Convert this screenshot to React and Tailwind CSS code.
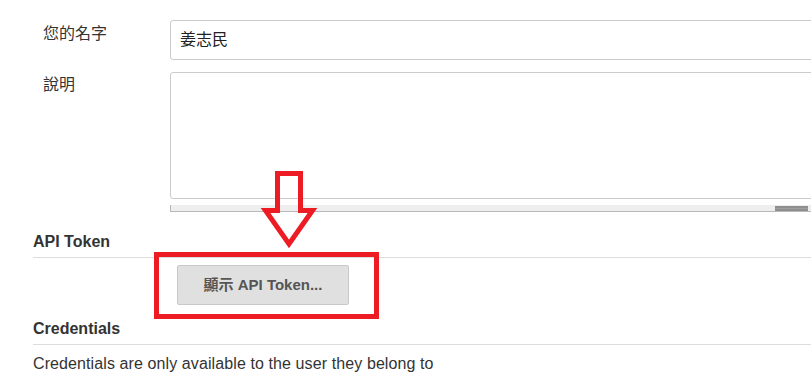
export default function App() {
  return (
    <div className="relative w-[811px] h-[380px] overflow-hidden bg-white text-[#333] font-['Liberation_Sans','Noto_Sans_CJK_TC',sans-serif]">
      <div className="pt-[20px]">
        {/* Row: name */}
        <div className="flex pl-[43px]">
          <div className="w-[127px] shrink-0 pt-[4px] text-[16px] leading-[20px]">您的名字</div>
          <div className="w-[660px] h-[40px] shrink-0 border border-[#cccccc] rounded-[3px] flex items-center pl-[9px] text-[16px] leading-[20px] text-[#222]">
            姜志民
          </div>
        </div>
        {/* Row: description */}
        <div className="flex pl-[43px] mt-[12px]">
          <div className="w-[127px] shrink-0 pt-[3px] text-[16px] leading-[20px]">說明</div>
          <div className="w-[660px] h-[127px] shrink-0 border border-[#cccccc] rounded-[3px]"></div>
        </div>
        {/* scroll strip */}
        <div className="ml-[170px] mt-[6px] w-[641px] h-[7px] bg-[#eeeeee] border-l border-b border-[#b8b8b8] flex justify-end items-center pr-[3px]">
          <div className="w-[33px] h-[5px] bg-[#a0a0a0] border-y-2 border-[#8f8f8f]"></div>
        </div>

        <div className="pl-[33px]">
          {/* API Token */}
          <div className="mt-[20px] pb-[5px] border-b border-[#dddddd] text-[16px] leading-[20px] font-bold">
            API Token
          </div>
          <div className="mt-[7px] pl-[144px]">
            <div className="w-[172px] h-[40px] bg-[#e0e0e0] border border-[#c9c9c9] rounded-[2px] flex items-center justify-center text-[15px] font-bold text-[#555555]">
              顯示 API Token...
            </div>
          </div>

          {/* Credentials */}
          <div className="mt-[14px] pb-[5px] border-b border-[#dddddd] text-[16px] leading-[20px] font-bold">
            Credentials
          </div>
          <div className="mt-[9px] text-[16px] leading-[20px] tracking-[0.1px]">
            Credentials are only available to the user they belong to
          </div>
        </div>
      </div>

      {/* red highlight box */}
      <div className="absolute left-[154px] top-[252px] w-[225px] h-[67px] border-[5px] border-[#ed1c24]"></div>

      {/* red arrow */}
      <svg className="absolute left-0 top-0 pointer-events-none" width="811" height="380" viewBox="0 0 811 380">
        <polygon
          points="277.5,173.5 300.5,173.5 300.5,210.5 312.5,210.5 289,244 265.5,210.5 277.5,210.5"
          fill="none"
          stroke="#ed1c24"
          strokeWidth="5"
          strokeLinejoin="miter"
        />
      </svg>
    </div>
  );
}
